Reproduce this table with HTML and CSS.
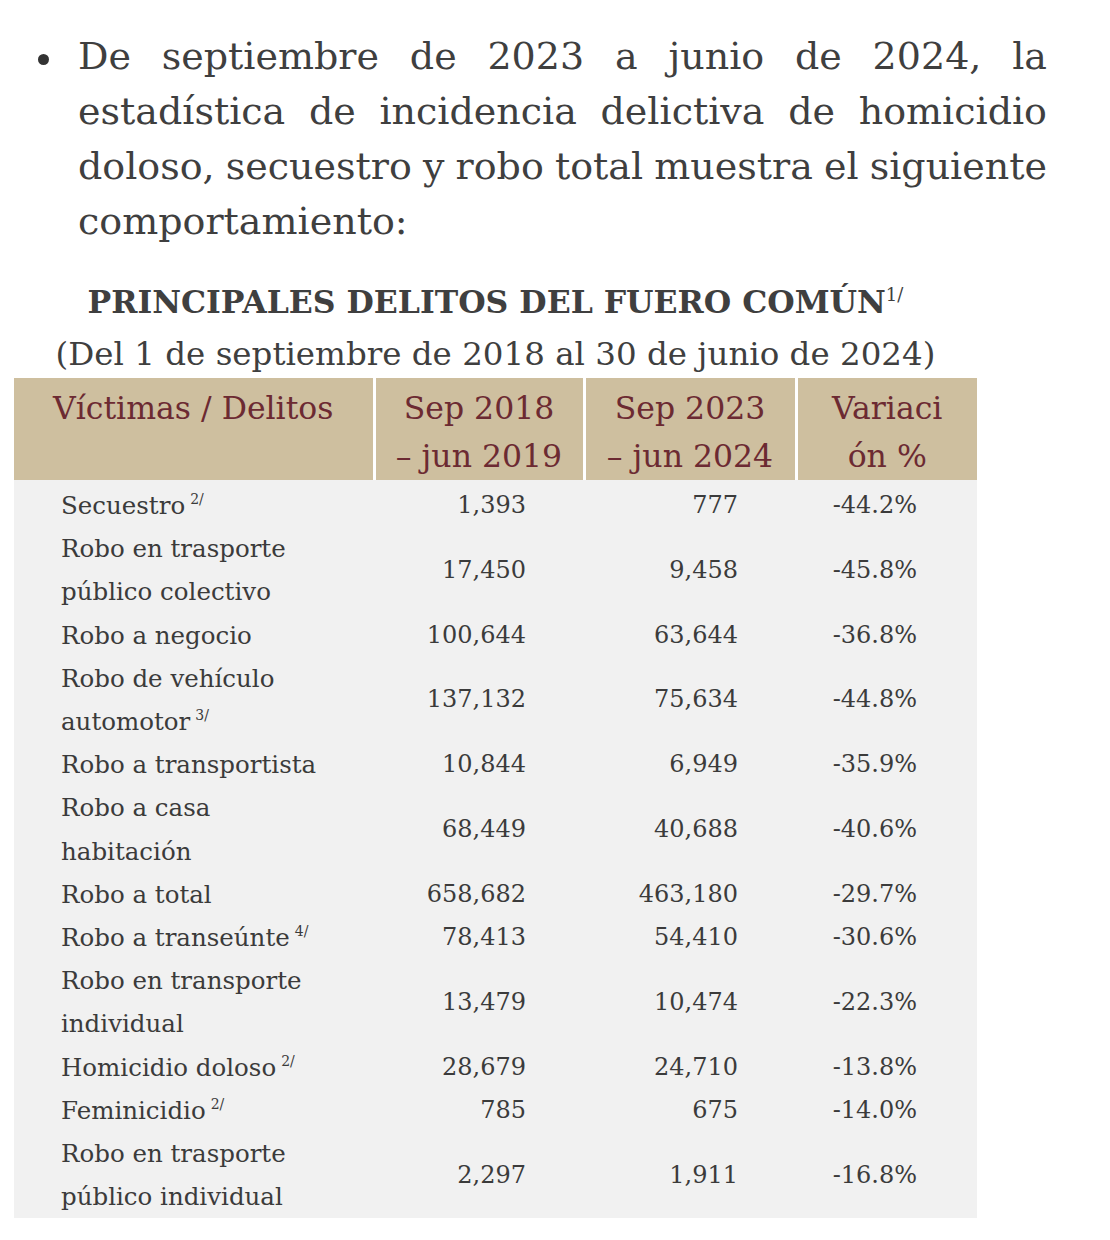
FILE: index.html
```html
<!DOCTYPE html>
<html lang="es">
<head>
<meta charset="utf-8">
<title>Principales delitos del fuero común</title>
<link rel="stylesheet" href="styles.css">
</head>
<body>
<main class="page">
  <ul class="bullets">
    <li class="bullet-item">
      <span class="line">De septiembre de 2023 a junio de 2024, la</span>
      <span class="line">estadística de incidencia delictiva de homicidio</span>
      <span class="line">doloso, secuestro y robo total muestra el siguiente</span>
      <span class="line last">comportamiento:</span>
    </li>
  </ul>

  <section class="report">
    <h2 class="title">PRINCIPALES DELITOS DEL FUERO COMÚN<sup class="title-note">1/</sup></h2>
    <p class="subtitle">(Del 1 de septiembre de 2018 al 30 de junio de 2024)</p>

    <table class="data">
      <colgroup>
        <col class="c1"><col class="c2"><col class="c3"><col class="c4">
      </colgroup>
      <thead>
        <tr>
          <th class="h-first">Víctimas / Delitos<br>&nbsp;</th>
          <th>Sep 2018<br>– jun 2019</th>
          <th>Sep 2023<br>– jun 2024</th>
          <th class="h-last">Variaci<br>ón %</th>
        </tr>
      </thead>
      <tbody>
        <tr class="first"><td class="name">Secuestro<sup class="note">2/</sup></td><td class="num">1,393</td><td class="num">777</td><td class="pct">-44.2%</td></tr>
        <tr><td class="name">Robo en trasporte<br>público colectivo</td><td class="num">17,450</td><td class="num">9,458</td><td class="pct">-45.8%</td></tr>
        <tr><td class="name">Robo a negocio</td><td class="num">100,644</td><td class="num">63,644</td><td class="pct">-36.8%</td></tr>
        <tr><td class="name">Robo de vehículo<br>automotor<sup class="note">3/</sup></td><td class="num">137,132</td><td class="num">75,634</td><td class="pct">-44.8%</td></tr>
        <tr><td class="name">Robo a transportista</td><td class="num">10,844</td><td class="num">6,949</td><td class="pct">-35.9%</td></tr>
        <tr><td class="name">Robo a casa<br>habitación</td><td class="num">68,449</td><td class="num">40,688</td><td class="pct">-40.6%</td></tr>
        <tr><td class="name">Robo a total</td><td class="num">658,682</td><td class="num">463,180</td><td class="pct">-29.7%</td></tr>
        <tr><td class="name">Robo a transeúnte<sup class="note">4/</sup></td><td class="num">78,413</td><td class="num">54,410</td><td class="pct">-30.6%</td></tr>
        <tr><td class="name">Robo en transporte<br>individual</td><td class="num">13,479</td><td class="num">10,474</td><td class="pct">-22.3%</td></tr>
        <tr><td class="name">Homicidio doloso<sup class="note">2/</sup></td><td class="num">28,679</td><td class="num">24,710</td><td class="pct">-13.8%</td></tr>
        <tr><td class="name">Feminicidio<sup class="note">2/</sup></td><td class="num">785</td><td class="num">675</td><td class="pct">-14.0%</td></tr>
        <tr class="last-row"><td class="name">Robo en trasporte<br>público individual</td><td class="num">2,297</td><td class="num">1,911</td><td class="pct">-16.8%</td></tr>
      </tbody>
    </table>
  </section>
</main>
</body>
</html>
```

FILE: styles.css
```css
html, body {
  margin: 0;
  padding: 0;
  background: #ffffff;
}

body {
  font-family: "DejaVu Serif", "Liberation Serif", serif;
  color: #3f3f3f;
}

.page {
  padding: 29px 0 0 14px;
}

.bullets {
  list-style: none;
  margin: 0;
  padding: 0 0 0 64px;
  width: 969px;
}

.bullet-item {
  position: relative;
  font-size: 38px;
  line-height: 55px;
}

.bullet-item::before {
  content: "";
  position: absolute;
  left: -40px;
  top: 25px;
  width: 11px;
  height: 11px;
  border-radius: 50%;
  background: #333333;
}

.line {
  display: block;
  text-align: justify;
  text-align-last: justify;
  white-space: nowrap;
  word-spacing: -2px;
}

.line.last {
  text-align-last: left;
}

.report {
  width: 963px;
  margin-top: 28px;
}

.title {
  margin: 0;
  text-align: center;
  font-size: 31.5px;
  font-weight: bold;
  line-height: 50px;
  color: #3f3f3f;
}

.title-note {
  font-size: 18px;
  font-weight: normal;
  vertical-align: 12px;
  line-height: 0;
}

.subtitle {
  margin: 3px 0 0;
  text-align: center;
  font-size: 32.5px;
  line-height: 48px;
  color: #3f3f3f;
}

.data {
  width: 963px;
  border-collapse: collapse;
  table-layout: fixed;
  background: #f1f1f1;
}

.c1 { width: 360px; }
.c2 { width: 210px; }
.c3 { width: 212px; }
.c4 { width: 181px; }

.data th {
  background: #cebf9f;
  color: #6c2a32;
  font-weight: normal;
  font-size: 31.5px;
  line-height: 48px;
  padding: 6px 0 0;
  text-align: center;
  vertical-align: top;
  border-right: 3px solid #ffffff;
  white-space: nowrap;
}

.data th.h-last {
  border-right: none;
}

.data td {
  font-size: 24.5px;
  line-height: 43.2px;
  padding: 0;
  vertical-align: middle;
  color: #3b3b3b;
}

.data tr.first td {
  padding-top: 4px;
}

.data td.name {
  padding-left: 47px;
}

.data td.num {
  text-align: right;
  padding-right: 58px;
  font-size: 24px;
}

.data td.pct {
  text-align: right;
  padding-right: 60px;
  font-size: 24px;
}

.note {
  font-size: 14px;
  line-height: 0;
  vertical-align: 10px;
  margin-left: 5px;
}
```
